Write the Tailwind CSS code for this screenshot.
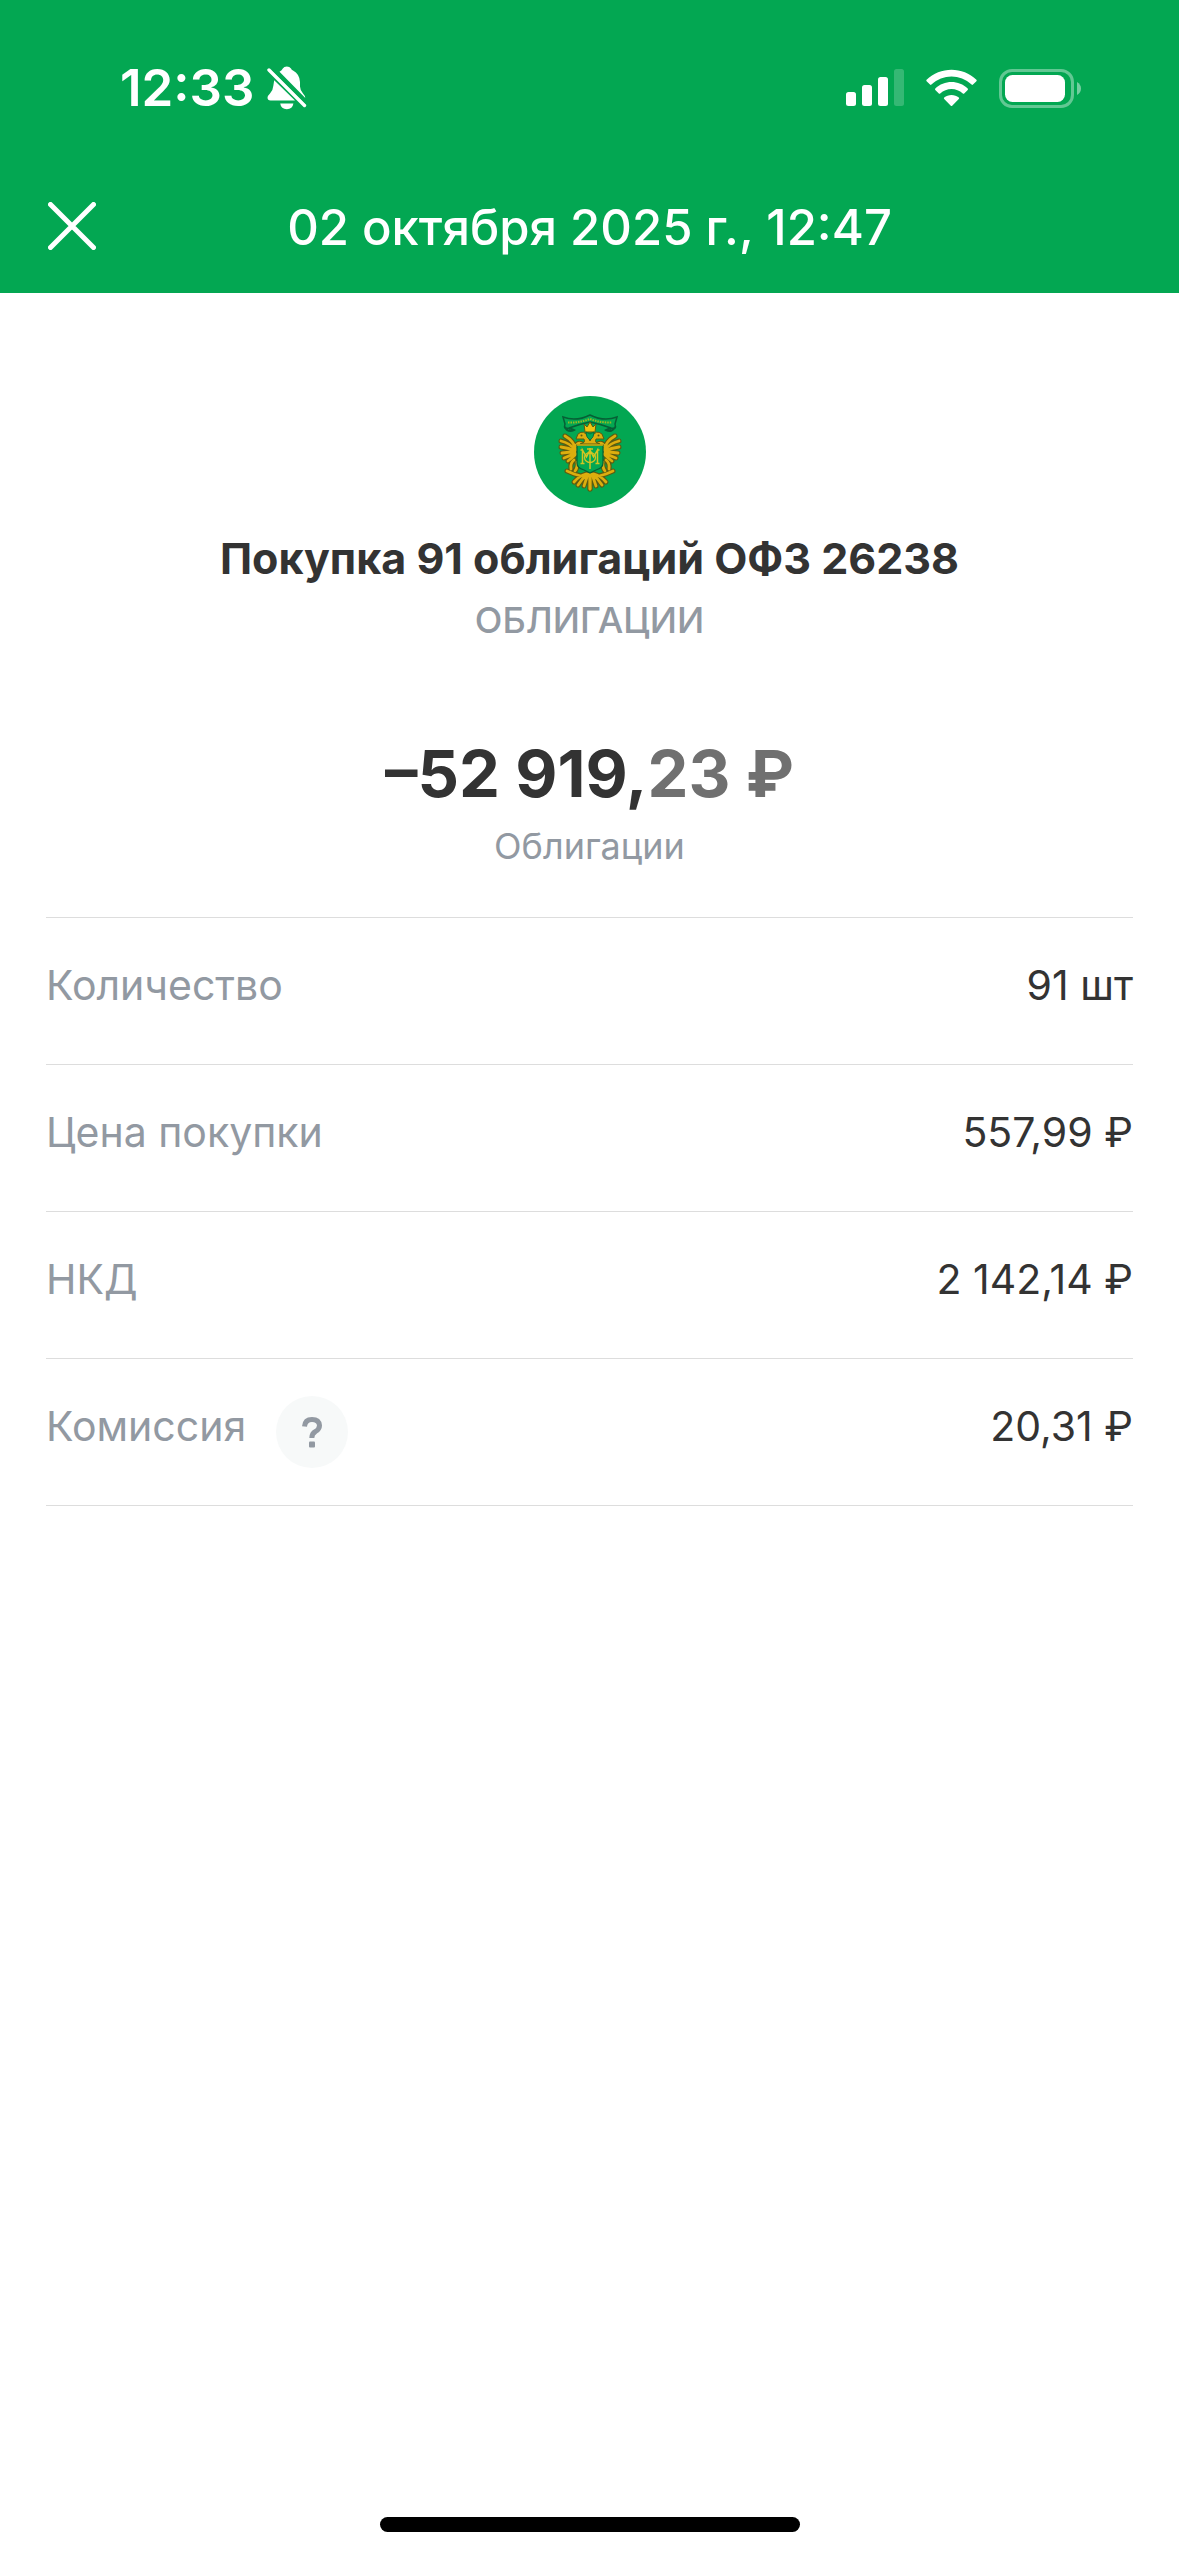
<!DOCTYPE html>
<html lang="ru">
<head>
<meta charset="utf-8">
<meta name="viewport" content="width=device-width, initial-scale=1">
<title>Покупка облигаций</title>
<script src="https://cdn.jsdelivr.net/npm/@tailwindcss/browser@4"></script>
</head>
<body class="flex min-h-screen flex-col bg-white font-['Inter',sans-serif] text-[#333333]">
<header class="bg-[#03a752] text-white">
  <div class="flex h-44 items-center justify-between pl-[120px] pr-[98px]">
    <div class="flex items-center gap-3">
      <span class="text-[51px] leading-[60px] font-semibold">12:33</span>
      <svg class="h-[44px] w-[40px]" viewBox="0 0 40 44" fill="#fff" aria-hidden="true">
        <path d="M12.500 5.800Q15 4.300 15.800 2.500Q17 0.500 19.800 0.500T24 2.500Q24.500 3.800 26 4.600Q32.500 8 33 16V20.500Q33.200 24.500 36 27.500Q38.200 29.800 38.300 32Z"/>
        <path d="M7.200 14.200L28 34.500H3.500Q0.500 34.200 0.500 31.800Q0.500 29.800 3 27.500Q6 24.500 6.400 19.500Z"/>
        <path d="M13.200 37.600H26.400Q25.500 43.300 19.800 43.300T13.200 37.600Z"/>
        <path d="M2 4L37.500 39.500" stroke="#fff" stroke-width="3.400" stroke-linecap="round"/>
        <path d="M6 3.500L40 37.500" stroke="#03a752" stroke-width="2"/>
      </svg>
    </div>
    <div class="flex items-center">
      <svg class="h-[38px] w-[58px]" viewBox="0 0 58 38" fill="#fff" aria-hidden="true">
        <rect x="0" y="23" width="10" height="14" rx="2.500"/><rect x="16" y="16" width="10" height="21" rx="2.500"/><rect x="32" y="8" width="10" height="29" rx="2.500"/><rect x="48" y="0" width="10" height="37" rx="2.500" opacity=".2"/>
      </svg>
      <svg class="ml-[22px] h-[38px] w-[51px]" viewBox="0 0 51 38" fill="#fff" aria-hidden="true">
        <path d="M0.600 10.800C14-2.600 37-2.600 50.400 10.800Q51 11.500 50.400 12.200L47 15.600Q46.300 16.200 45.600 15.600C34 4.900 17 4.900 5.400 15.600Q4.700 16.200 4 15.600L0.600 12.200Q0 11.500 0.600 10.800Z"/>
        <path d="M9.300 19.600C18 10.700 33 10.700 41.700 19.600Q42.300 20.300 41.700 21L38.200 24.500Q37.500 25.100 36.800 24.500C30.500 18.500 20.500 18.500 14.200 24.500Q13.500 25.100 12.800 24.500L9.300 21Q8.700 20.300 9.300 19.600Z"/>
        <path d="M18.200 28.600C22 25.200 29 25.200 32.800 28.600Q33.500 29.300 32.800 30L26.200 36.700Q25.500 37.300 24.800 36.700L18.200 30Q17.500 29.300 18.200 28.600Z"/>
      </svg>
      <svg class="ml-[22px] h-[39px] w-[82px]" viewBox="0 0 82 39" fill="#fff" aria-hidden="true">
        <rect x="1.500" y="1.500" width="72" height="36" rx="11.500" fill="none" stroke="#fff" stroke-width="3" opacity=".38"/>
        <rect x="6" y="6" width="60" height="27" rx="7.500"/>
        <path d="M78 13Q82 15.500 82 19.500T78 26Z" opacity=".45"/>
      </svg>
    </div>
  </div>
  <div class="grid h-[117px] grid-cols-[1fr_auto_1fr] items-start px-12">
    <button type="button" aria-label="Закрыть" class="mt-[26px] size-12">
      <svg class="size-12" viewBox="0 0 48 48" fill="none" stroke="#fff" stroke-width="5" stroke-linecap="round" aria-hidden="true"><path d="M2.500 2.500L45.500 45.500M45.500 2.500L2.500 45.500"/></svg>
    </button>
    <h1 class="mt-[22px] text-[49px] leading-[60px] font-medium">02 октября 2025 г., 12:47</h1>
  </div>
</header>
<main class="flex-1 px-[46px] pt-[103px]">
  <section class="flex flex-col items-center text-center">
    <svg class="size-28" viewBox="0 0 112 112" aria-hidden="true">
      <defs>
        <g id="wing" fill="none" stroke-linecap="round">
          <path d="M42 54Q40 45 31 40M41 54Q36 47 27 45M41 55Q35 52 27 51M41 56Q35 56 28 57M41 57Q36 60 30 62M42 58Q38 62 34 65M42 50Q44 46 48 48"/>
        </g>
        <g id="tail" fill="none" stroke-linecap="round">
          <path d="M56 78V93M54 78Q52 84 50 90M53 78Q48 83 44 89M52 78Q45 80 40 86M40 64Q36 67 37 73M43 66Q44 71 41 75M33 75L40 78L47 80"/>
        </g>
      </defs>
      <circle cx="56" cy="56" r="56" fill="#03a752"/>
      <path d="M29 21Q42 26 56 19Q70 26 83 21L81 28Q83 34 77 32Q66 28 56 26Q46 28 35 32Q29 34 31 28Z" fill="#03a752" stroke="#075f35" stroke-width="1.500"/>
      <path d="M34 26.500Q45 27 56 23Q67 27 78 26.500" fill="none" stroke="#9aba22" stroke-width="2" stroke-dasharray="1.500 1"/>
      <path d="M31 31Q34 37 40 34Q37 32 35 33M81 31Q78 37 72 34Q75 32 77 33" fill="none" stroke="#075f35" stroke-width="2"/>
      <g stroke="#5d5a10" stroke-width="5">
        <use href="#wing"/><use href="#wing" transform="matrix(-1 0 0 1 112 0)"/>
        <use href="#tail"/><use href="#tail" transform="matrix(-1 0 0 1 112 0)"/>
      </g>
      <g stroke="#dcae0e" stroke-width="2.800">
        <use href="#wing"/><use href="#wing" transform="matrix(-1 0 0 1 112 0)"/>
        <use href="#tail"/><use href="#tail" transform="matrix(-1 0 0 1 112 0)"/>
      </g>
      <g fill="#dcae0e" stroke="#5d5a10" stroke-width="1">
        <path d="M46 48Q52 47 50 43L42 43L44 38Q50 33 54 41L56 45L58 41Q62 33 68 38L70 43L62 43Q60 47 66 48Z"/>
        <path d="M50 28L53 31L56 26L59 31L62 28L61 36H51Z" fill="#eec411"/>
      </g>
      <circle cx="47.500" cy="39.500" r="1" fill="#5d5a10"/><circle cx="64.500" cy="39.500" r="1" fill="#5d5a10"/>
      <path d="M52 36Q52 42 56 44Q60 42 60 36L56 38Z" fill="#03a752" stroke="#075f35" stroke-width=".7"/>
      <path d="M43 49H69V67Q69 72 62 74L56 77L50 74Q43 72 43 67Z" fill="#03a752" stroke="#075f35" stroke-width="1.200"/>
      <path d="M43 49H69" stroke="#dcae0e" stroke-width="1.500"/>
      <path d="M48.500 67V54L52.500 61L56 54L59.500 61L63.500 54V67M46.500 67.500H50.500M61.500 67.500H65.500M46.500 54H49M63 54H65.500M56 52V73M53 53H59" fill="none" stroke="#d3c522" stroke-width="1.500"/>
      <ellipse cx="56" cy="61.500" rx="5.500" ry="5" fill="none" stroke="#d3c522" stroke-width="1.300"/>
    </svg>
    <h2 class="mt-6 text-[43px] leading-[52px] font-bold">Покупка 91 облигаций ОФЗ 26238</h2>
    <p class="mt-3.5 text-[36px] leading-[44px] font-medium text-[#9299a2]">ОБЛИГАЦИИ</p>
    <p class="mt-24 text-[65px] leading-[72px] font-bold">–52 919,<span class="text-[#707070]">23 ₽</span></p>
    <p class="mt-3.5 text-[36px] leading-[44px] text-[#9299a2]">Облигации</p>
  </section>
  <dl class="mt-[49px] border-t border-[#dddddd] text-[41px] leading-[52px]">
    <div class="flex h-[147px] justify-between border-b border-[#dddddd] pt-[41px]">
      <dt class="text-[#9299a2]">Количество</dt><dd>91 шт</dd>
    </div>
    <div class="flex h-[147px] justify-between border-b border-[#dddddd] pt-[41px]">
      <dt class="text-[#9299a2]">Цена покупки</dt><dd>557,99 ₽</dd>
    </div>
    <div class="flex h-[147px] justify-between border-b border-[#dddddd] pt-[41px]">
      <dt class="text-[#9299a2]">НКД</dt><dd>2 142,14 ₽</dd>
    </div>
    <div class="flex h-[147px] justify-between border-b border-[#dddddd] pt-[41px]">
      <dt class="flex items-start gap-[30px] text-[#9299a2]">Комиссия
        <button type="button" aria-label="О комиссии" class="-mt-1 flex size-18 items-center justify-center rounded-full bg-[#f7f9f9]">
          <svg class="h-8 w-5" viewBox="0 0 20 32" fill="none" aria-hidden="true"><path d="M2.500 10.500Q3 3.500 10 3.500T17.500 9.500Q17.500 13 13.500 15.500Q9.800 17.500 9.800 22" stroke="#9299a2" stroke-width="5"/><rect x="7" y="25.500" width="6" height="6" rx="1" fill="#9299a2"/></svg>
        </button>
      </dt><dd>20,31 ₽</dd>
    </div>
  </dl>
</main>
<footer class="flex justify-center pb-6">
  <div class="h-[15px] w-[420px] rounded-full bg-black"></div>
</footer>
</body>
</html>
